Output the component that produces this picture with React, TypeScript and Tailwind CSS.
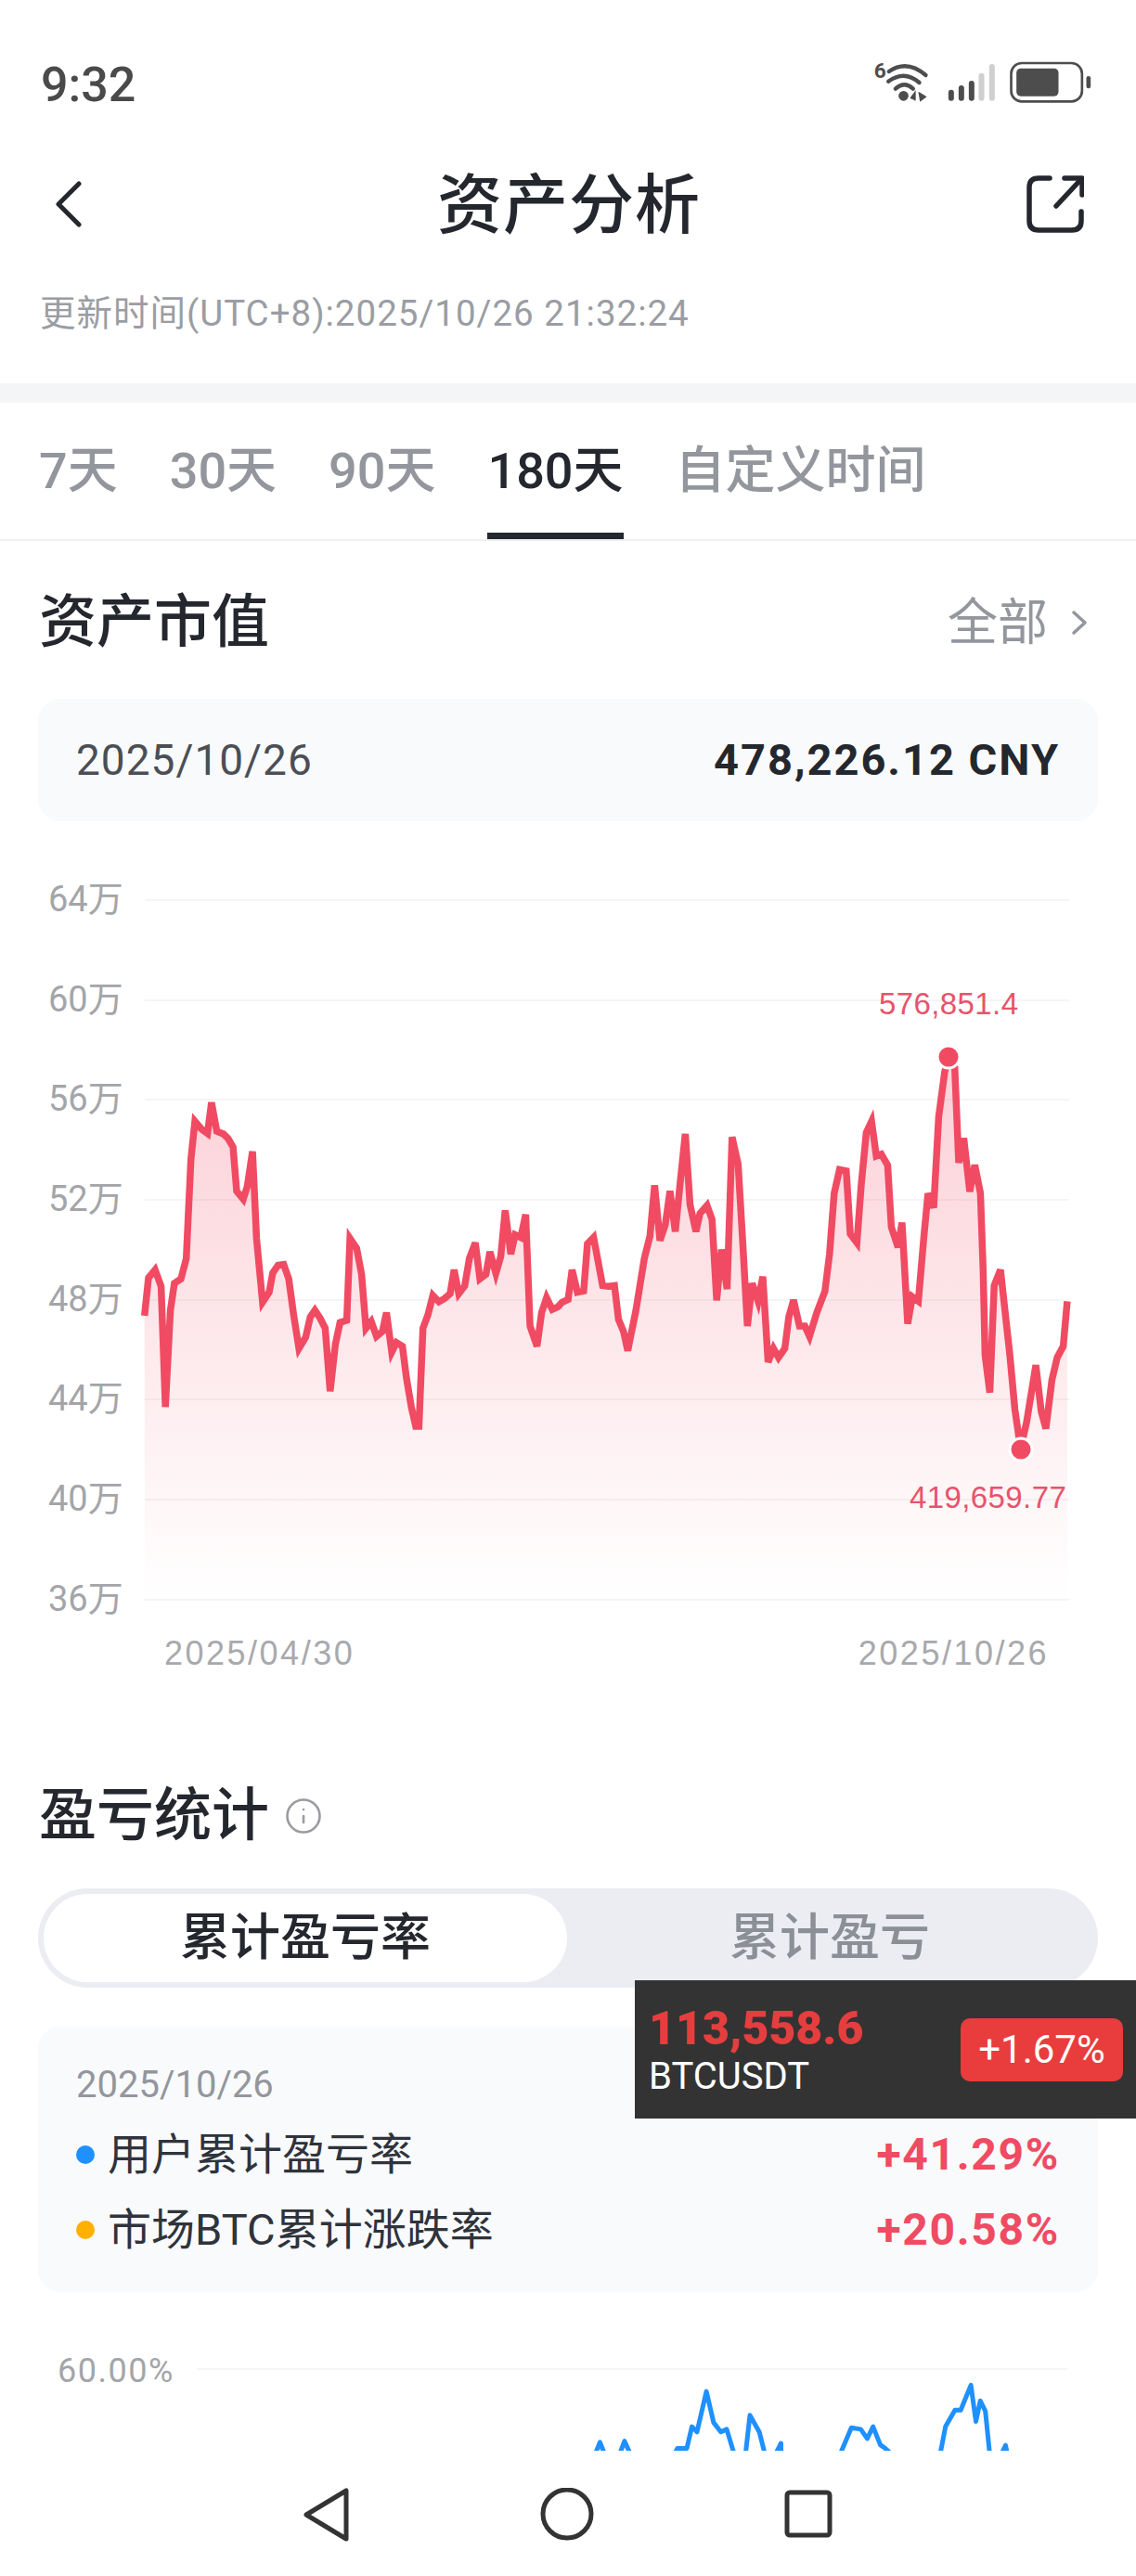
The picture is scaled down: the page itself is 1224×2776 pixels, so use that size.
import { Info } from "lucide-react";

const LEFT = [
  [100,862],[112,778],[132,760],[150,797],[163,1065],[178,850],[190,790],[210,780],[226,735],[240,515],[252,430],[272,447],[290,457],[302,388],[318,452],[338,458],[352,468],[367,487],[378,585],[398,603],[410,575],[426,497],[438,690],[456,832],[476,810],[487,767],[503,750],[520,748],[535,780],[550,860],[566,935],[586,910],[600,865],[614,850],[630,868],[645,890],[660,1030],[676,925],[690,877],[710,872],[720,690],[740,712],[755,770],[768,890],[784,875],[800,908],[818,897],[830,855],[846,943],[860,922],[878,930],[890,1000],[905,1065],[918,1108],[928,1108],[940,890],[955,860],[970,817],[988,831],[1005,824],[1022,813],[1034,760],[1048,813],[1066,796],[1080,735],[1098,700],[1112,780],[1130,770],[1142,720],[1160,768],[1175,730],[1188,628],[1205,725],[1218,682],[1235,688],[1250,637],[1263,885],[1284,930],[1298,855],[1313,822],[1330,848],[1348,842],[1360,832],[1378,826],[1390,760],[1406,810],[1425,807],[1436,702],[1455,688],[1482,795],[1500,797],[1518,795],[1530,870],[1545,897],[1558,940],
].map(([x, y]) => [120 + x / 2.8, 1000 + y / 2.063]);

const RIGHT = [
  [70,850],[95,735],[112,685],[126,572],[142,695],[158,660],[172,585],[188,675],[205,550],[218,458],[232,615],[250,675],[262,635],[283,617],[298,648],[312,828],[326,715],[343,803],[358,465],[376,525],[390,700],[404,885],[418,790],[436,830],[450,775],[466,965],[482,935],[497,955],[516,935],[528,865],[542,827],[560,885],[576,885],[590,908],[612,855],[636,808],[650,725],[664,590],[680,537],[700,540],[712,680],[732,700],[745,570],[760,455],[776,430],[790,507],[805,503],[824,527],[835,665],[855,710],[867,655],[884,880],[898,820],[916,830],[932,690],[945,590],[962,622],[977,420],[995,320],[1007,288],[1025,310],[1037,522],[1052,467],[1070,586],[1085,527],[1102,590],[1110,760],[1116,950],[1130,1033],[1143,795],[1162,760],[1190,950],[1205,1070],[1222,1158],[1240,1100],[1268,972],[1284,1075],[1298,1113],[1316,1005],[1332,955],[1350,930],[1362,830],
].map(([x, y]) => [660 + x / 2.78, 1000 + y / 2.063]);

const LINE = [...LEFT, ...RIGHT].map(([x, y]) => `${x.toFixed(1)},${y.toFixed(1)}`).join(" ");
const AREA = `156,1723 ${LINE} 1150,1723`;

// points at 1345 fall below the nav bar, so only the peaks show
const BLUE = [
  [818,1345],[828,1310],[838,1345],[852,1345],[862,1308],[874,1345],[926,1345],[935,1322],[948,1322],[955,1280],[962,1290],[975,1212],[985,1272],[995,1290],[1003,1285],[1016,1345],[1028,1345],[1035,1258],[1048,1290],[1058,1345],[1066,1345],[1078,1312],[1078,1345],[1156,1345],[1175,1282],[1188,1285],[1197,1303],[1205,1280],[1215,1315],[1222,1322],[1240,1345],[1296,1345],[1305,1280],[1318,1248],[1326,1248],[1340,1200],[1347,1270],[1353,1230],[1360,1250],[1367,1345],[1378,1345],[1388,1316],[1392,1345],
]
  .map(([x, y]) => `${(x / 1.281).toFixed(1)},${(1900 + y / 1.79).toFixed(1)}`)
  .join(" ");

const TICKS = ["64万", "60万", "56万", "52万", "48万", "44万", "40万"];

function StatusIcons() {
  return (
    <svg viewBox="120 25 710 165" className="w-[237px] h-[55px] -mt-[10px]" fill="none">
      <text x="122" y="110" fontSize="68" fontWeight="700" fill="#4d4d4d" fontFamily="Roboto, sans-serif">6</text>
      <g stroke="#4d4d4d" strokeWidth="13" strokeLinecap="round">
        <path d="M170 88 Q228 48 289 100" />
        <path d="M168 120 Q220 82 268 124" />
        <path d="M191 144 Q220 118 248 144" />
      </g>
      <circle cx="217" cy="167" r="16" fill="#4d4d4d" />
      <path d="M240 175 L254 156 V182 M268 158 L288 170 L272 182 Z" stroke="#4d4d4d" strokeWidth="5" fill="#4d4d4d" />
      <rect x="362" y="147" width="18" height="36" rx="9" fill="#4d4d4d" />
      <rect x="395" y="133" width="18" height="50" rx="9" fill="#4d4d4d" />
      <rect x="428" y="118" width="18" height="65" rx="9" fill="#4d4d4d" />
      <rect x="460" y="93" width="18" height="90" rx="9" fill="#cfcfcf" />
      <rect x="494" y="64" width="18" height="119" rx="9" fill="#cfcfcf" />
      <rect x="565" y="61" width="229" height="124" rx="34" stroke="#4d4d4d" strokeWidth="8" />
      <rect x="582" y="78" width="136" height="90" rx="14" fill="#4d4d4d" />
      <rect x="808" y="103" width="14" height="40" rx="7" fill="#4d4d4d" />
    </svg>
  );
}

export default function App() {
  return (
    <div className="relative flex flex-col h-[2776px] w-[1224px] overflow-hidden bg-white text-[#24272e] font-['Roboto','Noto_Sans_CJK_SC',sans-serif]">
      <main className="h-[2641px] overflow-hidden">
        {/* Status bar */}
        <div className="h-[160px] flex justify-between items-start pl-[44px] pr-[46px] pt-[66px]">
          <span className="text-[52px] leading-[52px] font-medium text-[#4a4a4a]">9:32</span>
          <StatusIcons />
        </div>

        {/* Header */}
        <div className="h-[120px] flex items-center pl-[58px] pr-[56px]">
          <div className="flex-1">
            <svg width="32" height="50" viewBox="0 0 32 50" fill="none" stroke="#24272e" strokeWidth="5" strokeLinecap="round" strokeLinejoin="round">
              <path d="M27 3 L5 25 L27 47" />
            </svg>
          </div>
          <h1 className="mt-[3px] text-[70px] leading-none font-medium tracking-[1px]">资产分析</h1>
          <div className="flex-1 flex justify-end">
            <svg width="62" height="62" viewBox="0 0 62 62" fill="none" stroke="#24272e" strokeWidth="5.5" strokeLinecap="round" strokeLinejoin="round">
              <path d="M25 3 H13 Q3 3 3 13 V49 Q3 59 13 59 H49 Q59 59 59 49 V39" />
              <path d="M32 33 L59 4" />
              <path d="M41 3 H60 V21" />
            </svg>
          </div>
        </div>

        <div className="h-[116px] mb-[17px] flex items-center px-[43px] text-[38.5px] tracking-[1px] text-[#9a9da3]">
          更新时间(UTC+8):2025/10/26 21:32:24
        </div>
        <div className="h-[21px] bg-[#f4f5f7]" />

        {/* Time range tabs */}
        <div className="h-[149px] flex gap-[56px] pl-[42px] border-b-2 border-[#eff0f2] text-[54px] font-medium text-[#93969c]">
          <div className="pt-[33px]">7天</div>
          <div className="pt-[33px]">30天</div>
          <div className="pt-[33px]">90天</div>
          <div className="relative pt-[33px] text-[#24272e]">
            180天
            <div className="absolute left-0 right-0 bottom-0 h-[7px] bg-[#24272e]" />
          </div>
          <div className="pt-[33px]">自定义时间</div>
        </div>

        {/* Asset value */}
        <div className="h-[170px] pt-[6px] flex items-center justify-between pl-[42px] pr-[52px]">
          <h2 className="text-[62px] font-medium leading-none">资产市值</h2>
          <div className="flex items-center gap-[25px] text-[54px] text-[#93969c]">
            全部
            <svg width="18" height="28" viewBox="0 0 18 28" fill="none" stroke="#93969c" strokeWidth="3.5" strokeLinecap="round" strokeLinejoin="round">
              <path d="M3 3 L15 14 L3 25" />
            </svg>
          </div>
        </div>
        <div className="mx-[41px] h-[132px] rounded-[24px] bg-[#f9fafc] flex items-center justify-between px-[41px]">
          <span className="text-[#4b4e55] text-[46px] tracking-[1px]">2025/10/26</span>
          <span className="font-bold text-[47px] tracking-[2px]">478,226.12 CNY</span>
        </div>

        {/* Asset chart */}
        <div className="relative mt-[84px]">
          {TICKS.map((t) => (
            <div key={t} className="h-[107.7px] flex pl-[52px] pr-[72px]">
              <span className="w-[104px] h-[44px] -mt-[22px] leading-[44px] text-[38px] text-[#a3a5a9]">{t}</span>
              <div className="flex-1 border-t-2 border-[#f4f5f6]" />
            </div>
          ))}
          <div className="h-[39px] flex pl-[52px] pr-[72px]">
            <span className="w-[104px] h-[44px] -mt-[22px] leading-[44px] text-[38px] text-[#a3a5a9]">36万</span>
            <div className="flex-1 border-t-2 border-[#f4f5f6]" />
          </div>
          <svg viewBox="0 969 1224 800" className="absolute left-0 top-0 w-[1224px] h-[800px]" fill="none">
            <defs>
              <linearGradient id="area" gradientUnits="userSpaceOnUse" x1="0" y1="1190" x2="0" y2="1723">
                <stop offset="0" stopColor="#f04b63" stopOpacity="0.24" />
                <stop offset="1" stopColor="#f04b63" stopOpacity="0" />
              </linearGradient>
            </defs>
            <polygon points={AREA} fill="url(#area)" />
            <polyline points={LINE} stroke="#f04b63" strokeWidth="7.5" strokeLinejoin="miter" />
            <circle cx="1022" cy="1139" r="12" fill="#f04b63" stroke="#ffffff" strokeWidth="3" />
            <circle cx="1100" cy="1562" r="12" fill="#f04b63" stroke="#ffffff" strokeWidth="3" />
          </svg>
          <span className="absolute left-[947px] top-[93px] leading-[40px] text-[33px] tracking-[0.4px] text-[#e8536b] font-['Liberation_Sans',sans-serif]">576,851.4</span>
          <span className="absolute left-[980px] top-[625px] leading-[40px] text-[33px] tracking-[0.4px] text-[#e8536b] font-['Liberation_Sans',sans-serif]">419,659.77</span>
          <div className="h-[40px] flex justify-between pl-[177px] pr-[94px] text-[36px] tracking-[2.5px] leading-[40px] text-[#a8a9ad] font-['Liberation_Sans',sans-serif]">
            <span>2025/04/30</span>
            <span>2025/10/26</span>
          </div>
        </div>

        {/* Profit stats */}
        <div className="mt-[105px] h-[100px] flex items-center gap-[16px] pl-[42px]">
          <h2 className="text-[62px] font-medium leading-none">盈亏统计</h2>
          <Info size={42} strokeWidth={1.5} className="text-[#9a9ca0]" />
        </div>
        <div className="mt-[28px] mx-[41px] h-[107px] rounded-full bg-[#ebedf2] p-[6px] flex items-center">
          <div className="w-[564px] h-full rounded-full bg-white flex items-center justify-center text-[54px] font-medium">累计盈亏率</div>
          <div className="flex-1 flex items-center justify-center text-[54px] font-medium text-[#8b8f96]">累计盈亏</div>
        </div>
        <div className="mt-[42px] mx-[41px] h-[286px] rounded-[24px] bg-[#f9fafc] px-[41px] pt-[36px]">
          <div className="h-[54px] leading-[54px] text-[40px] text-[#93969c]">2025/10/26</div>
          <div className="mt-[8px] h-[81px] flex items-center text-[47px] text-[#2f333b]">
            <span className="w-[20px] h-[20px] rounded-full bg-[#1e90ff] mr-[14px]" />
            用户累计盈亏率
            <span className="ml-auto font-bold text-[48px] tracking-[1.7px] text-[#f04b63]">+41.29%</span>
          </div>
          <div className="h-[81px] flex items-center text-[47px] text-[#2f333b]">
            <span className="w-[20px] h-[20px] rounded-full bg-[#ffb000] mr-[14px]" />
            市场BTC累计涨跌率
            <span className="ml-auto font-bold text-[48px] tracking-[1.7px] text-[#f04b63]">+20.58%</span>
          </div>
        </div>

        {/* Profit chart, cut off by the nav bar */}
        <div className="relative mt-[82px] h-[200px] flex pl-[62px] pr-[74px]">
          <span className="w-[150px] h-[44px] -mt-[19px] leading-[44px] text-[36px] tracking-[1.5px] text-[#a3a5a9]">60.00%</span>
          <div className="flex-1 border-t-2 border-[#f4f5f6]" />
          <svg viewBox="0 2552 1224 200" className="absolute left-0 top-0 w-[1224px] h-[200px]" fill="none">
            <polyline points={BLUE} stroke="#1e90ff" strokeWidth="5" strokeLinejoin="round" />
          </svg>
        </div>
      </main>

      {/* Android nav bar */}
      <nav className="h-[135px] bg-white flex items-start justify-center pt-[40px]">
        <svg width="640" height="60" viewBox="0 0 640 60" fill="none" stroke="#333333" strokeWidth="5" strokeLinejoin="round">
          <path d="M81 3 V55 L38 29 Z" />
          <ellipse cx="319" cy="28" rx="26" ry="26" />
          <rect x="556" y="5" width="46" height="46" rx="3" />
        </svg>
      </nav>

      {/* Floating ticker */}
      <div className="absolute left-[684px] top-[2134px] w-[540px] h-[149px] bg-[#333333] flex items-center justify-between pl-[15px] pr-[14px]">
        <div className="flex flex-col">
          <span className="text-[50px] leading-[58px] font-black text-[#e53e3e]">113,558.6</span>
          <span className="text-[40px] leading-[46px] text-white">BTCUSDT</span>
        </div>
        <span className="w-[175px] h-[68px] rounded-[10px] bg-[#e93c3c] flex items-center justify-center text-[42px] text-white">+1.67%</span>
      </div>
    </div>
  );
}
